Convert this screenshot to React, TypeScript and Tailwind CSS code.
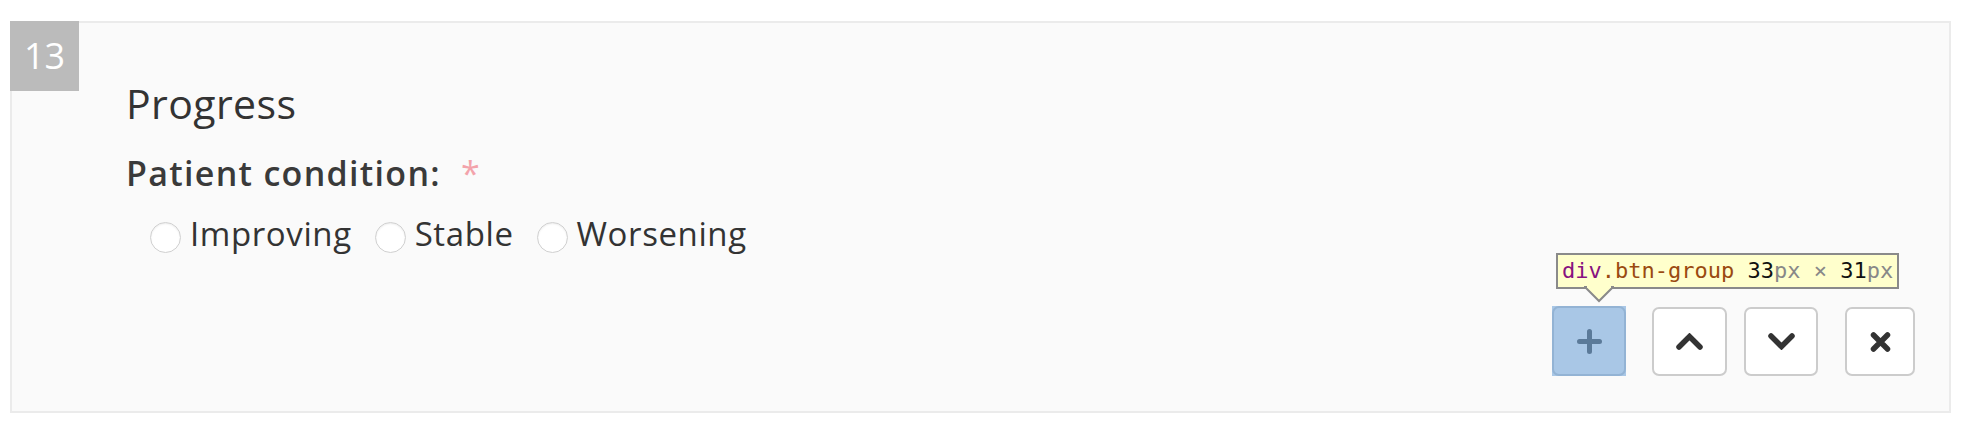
import React from "react";

function Radio({ label }: { label: string }) {
  return (
    <label className="flex items-start gap-[9px]">
      <span className="mt-[8px] block w-[31px] h-[31px] rounded-full border border-[#d0d0d0] bg-white shadow-[inset_0_1px_2px_rgba(0,0,0,0.08)]" />
      <span>{label}</span>
    </label>
  );
}

export default function App() {
  return (
    <div className="w-[1966px] h-[434px] bg-white overflow-hidden pt-[21px] pl-[10px]" style={{ fontFamily: '"Open Sans", sans-serif' }}>
      <div className="relative w-[1941px] h-[392px] border-2 border-[#ebebeb] bg-[#fafafa] flex flex-col">
        <div className="absolute top-[-2px] left-[-2px] w-[69px] h-[70px] bg-[#bbbbbb] text-white text-[36px] leading-[70px] text-center">
          13
        </div>
        <div className="pl-[114px] pt-[56px] text-[#333333]">
          <div className="text-[41px] leading-[48px] tracking-[0.4px]">Progress</div>
          <div className="mt-[26px] text-[34px] leading-[40px] font-semibold tracking-[1.3px] text-[#3a3a3a]">
            Patient condition:<span className="ml-[20px] font-normal text-[#f3a3ab]">*</span>
          </div>
          <div className="mt-[21px] pl-[24px] flex gap-[23px] text-[33px] leading-[40px] tracking-[0.6px]">
            <Radio label="Improving" />
            <Radio label="Stable" />
            <Radio label="Worsening" />
          </div>
        </div>
        <div className="mt-auto mb-[35px] pr-[34px] flex justify-end items-start">
          <div className="relative w-[74px] h-[70px] mt-[-1px] bg-[#a9c7e6]">
            <div className="w-full h-full rounded-[7px] border-2 border-[#93b3d4] flex items-center justify-center">
              <svg width="25" height="25" viewBox="0 0 25 25">
                <path d="M12.5 2.5 V22.5 M2.5 12.5 H22.5" stroke="#5b7a99" strokeWidth="5" strokeLinecap="round" fill="none" />
              </svg>
            </div>
            <div className="absolute left-[4px] top-[-53px] whitespace-nowrap">
              <div className="h-[36px] border-2 border-[#8a8a8a] bg-[#ffffcc] px-[4px] text-[22px] leading-[32px]" style={{ fontFamily: '"DejaVu Sans Mono", monospace' }}>
                <span className="text-[#881280]">div</span>
                <span className="text-[#9a4a10]">.btn-group</span>
                <span className="text-[#111]"> 33</span>
                <span className="text-[#888]">px × </span>
                <span className="text-[#111]">31</span>
                <span className="text-[#888]">px</span>
              </div>
              <svg className="absolute left-[28px] top-[33px]" width="30" height="17" viewBox="0 0 30 17">
                <polygon points="1,1 15,15 29,1" fill="#ffffcc" stroke="#8a8a8a" strokeWidth="2" />
                <rect x="3" y="0" width="24" height="2" fill="#ffffcc" />
              </svg>
            </div>
          </div>
          <div className="ml-[26px] w-[75px] h-[69px] rounded-[7px] border-2 border-[#cccccc] bg-white flex items-center justify-center">
            <svg width="27" height="17" viewBox="0 0 27 17">
              <polyline points="3,14 13.5,3.5 24,14" stroke="#333" strokeWidth="5.5" fill="none" strokeLinecap="round" strokeLinejoin="miter" />
            </svg>
          </div>
          <div className="ml-[17px] w-[74px] h-[69px] rounded-[7px] border-2 border-[#cccccc] bg-white flex items-center justify-center">
            <svg width="27" height="17" viewBox="0 0 27 17">
              <polyline points="3,3 13.5,13.5 24,3" stroke="#333" strokeWidth="5.5" fill="none" strokeLinecap="round" strokeLinejoin="miter" />
            </svg>
          </div>
          <div className="ml-[27px] w-[70px] h-[69px] rounded-[7px] border-2 border-[#cccccc] bg-white flex items-center justify-center">
            <svg width="21" height="20" viewBox="0 0 21 20">
              <path d="M3.5 3 L17.5 17 M17.5 3 L3.5 17" stroke="#333" strokeWidth="5.5" strokeLinecap="round" fill="none" />
            </svg>
          </div>
        </div>
      </div>
    </div>
  );
}
